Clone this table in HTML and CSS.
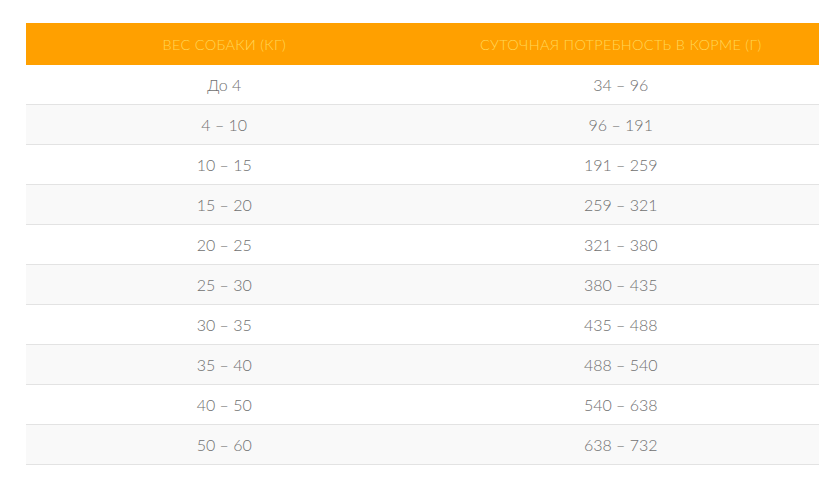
FILE: index.html
```html
<!DOCTYPE html>
<html lang="ru">
<head>
<meta charset="utf-8">
<link rel="stylesheet" href="styles.css">
</head>
<body>
<div class="wrap">
<table class="feed">
<thead>
<tr><th>Вес собаки (кг)</th><th>Суточная потребность в корме (г)</th></tr>
</thead>
<tbody>
<tr><td>До 4</td><td>34 – 96</td></tr>
<tr><td>4 – 10</td><td>96 – 191</td></tr>
<tr><td>10 – 15</td><td>191 – 259</td></tr>
<tr><td>15 – 20</td><td>259 – 321</td></tr>
<tr><td>20 – 25</td><td>321 – 380</td></tr>
<tr><td>25 – 30</td><td>380 – 435</td></tr>
<tr><td>30 – 35</td><td>435 – 488</td></tr>
<tr><td>35 – 40</td><td>488 – 540</td></tr>
<tr><td>40 – 50</td><td>540 – 638</td></tr>
<tr><td>50 – 60</td><td>638 – 732</td></tr>
</tbody>
</table>
</div>
</body>
</html>
```
FILE: styles.css
```css
html, body {
  margin: 0;
  padding: 0;
  background: #fff;
}
.wrap {
  padding: 23px 18px 0 26px;
}
.feed {
  width: 793px;
  border-collapse: collapse;
  table-layout: fixed;
  font-family: Lato, "Open Sans", sans-serif;
  font-weight: 300;
}
.feed th {
  background: #ffa000;
  color: #ffd657;
  font-weight: 300;
  font-size: 14.5px;
  letter-spacing: 0.3px;
  text-transform: uppercase;
  height: 42px;
  padding: 0;
  text-align: center;
}
.feed td {
  height: 39px;
  padding: 0;
  text-align: center;
  font-size: 16px;
  color: #707070;
  border-bottom: 1px solid #e3e3e3;
}
.feed tbody tr:nth-child(even) td {
  background: #f9f9f9;
}
```
